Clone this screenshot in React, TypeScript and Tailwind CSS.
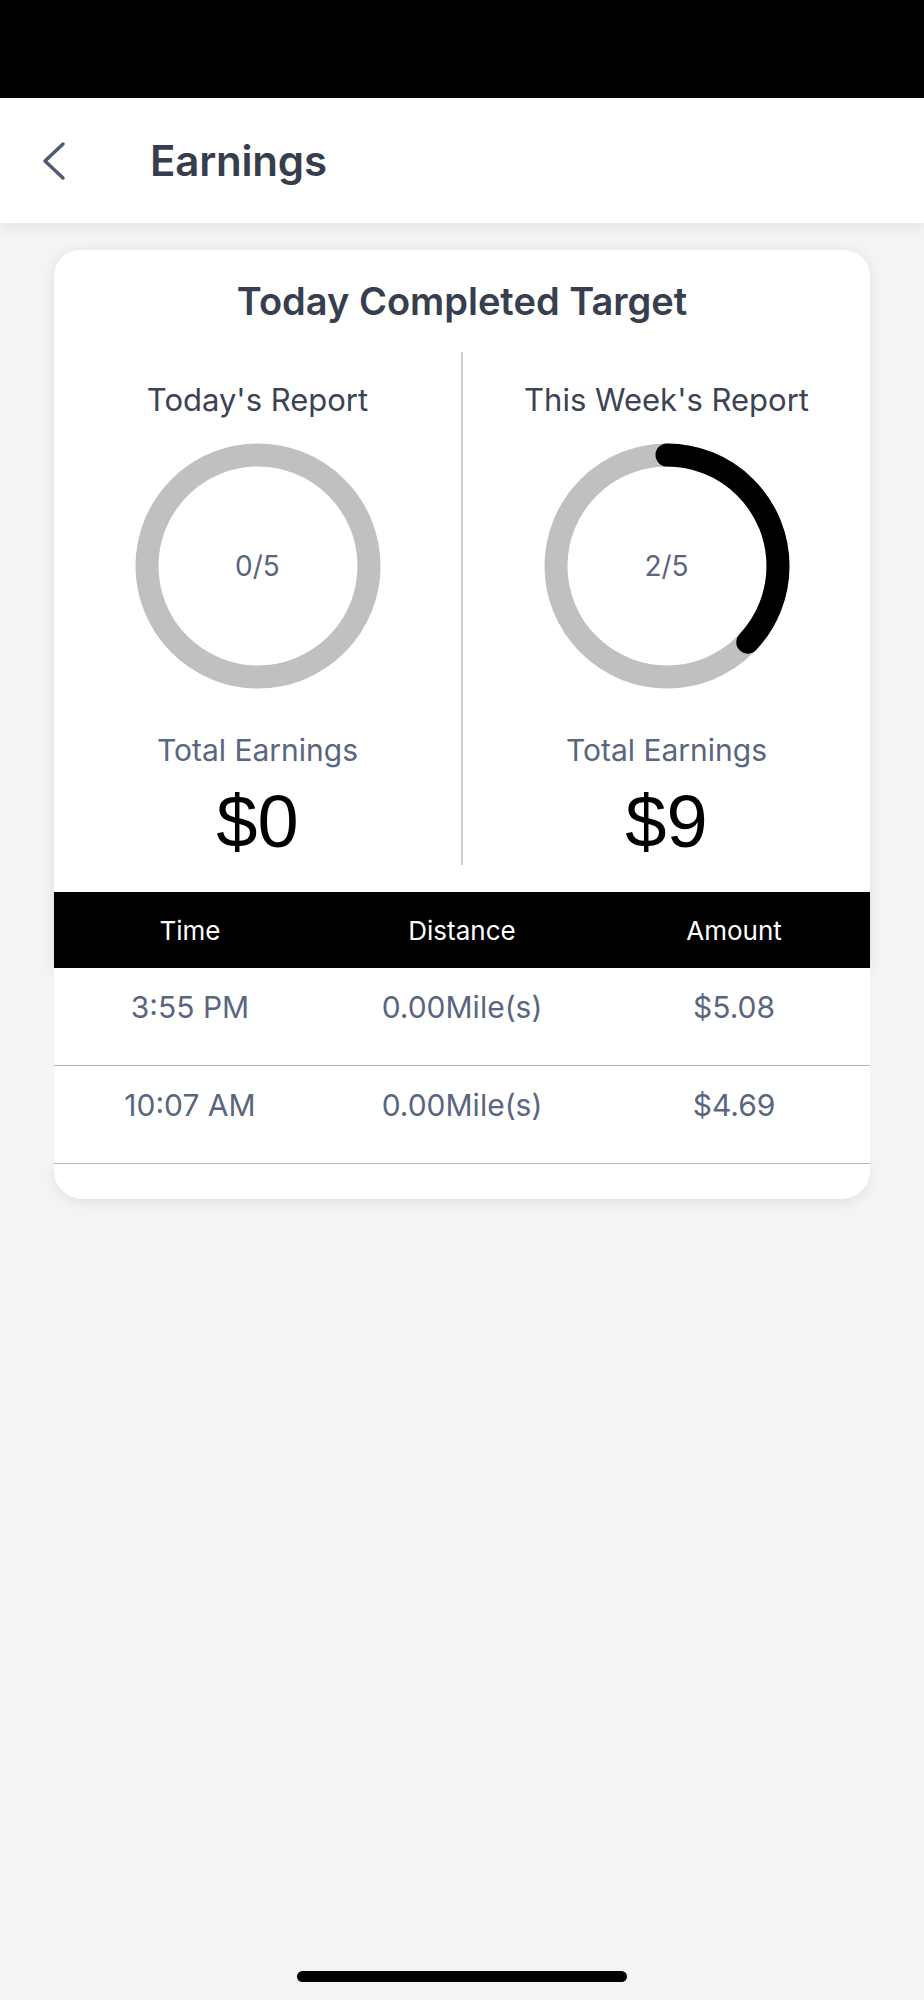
import React from 'react'

const RADIUS = 111
const CIRC = 2 * Math.PI * RADIUS

interface RingProps {
  label: string
  // fraction of the ring drawn in black
  progress: number
}

function Ring({ label, progress }: RingProps) {
  const dash = CIRC * progress
  return (
    <div className="relative w-[246px] h-[246px]">
      <svg width="246" height="246" viewBox="0 0 246 246" className="block">
        <circle cx="123" cy="123" r={RADIUS} fill="none" stroke="#c0c0c0" strokeWidth="23" />
        {progress > 0 && (
          <circle
            cx="123"
            cy="123"
            r={RADIUS}
            fill="none"
            stroke="#000"
            strokeWidth="23"
            strokeLinecap="round"
            strokeDasharray={`${dash} ${CIRC}`}
            transform="rotate(-90 123 123)"
          />
        )}
      </svg>
      <div className="absolute inset-0 flex items-center justify-center text-[28px] text-[#59647e]">
        {label}
      </div>
    </div>
  )
}

interface ReportProps {
  title: string
  ring: string
  progress: number
  total: string
}

function Report({ title, ring, progress, total }: ReportProps) {
  return (
    <div className="flex-1 flex flex-col items-center pt-[29px] pb-[3px]">
      <div className="text-[31px] leading-[38px] text-[#3b4354]">{title}</div>
      <div className="mt-[24px]">
        <Ring label={ring} progress={progress} />
      </div>
      <div className="mt-[42px] text-[30px] leading-[38px] text-[#5a6580]">Total Earnings</div>
      <div className="mt-[13px] text-[74px] leading-[80px] text-black font-['Liberation_Sans',Arial,sans-serif]">
        {total}
      </div>
    </div>
  )
}

const rows = [
  { time: '3:55 PM', distance: '0.00Mile(s)', amount: '$5.08' },
  { time: '10:07 AM', distance: '0.00Mile(s)', amount: '$4.69' },
]

export default function App() {
  return (
    <div className="relative min-h-[2000px] bg-[#f4f4f4] font-['Inter','Noto_Sans',sans-serif]">
      {/* status bar */}
      <div className="h-[98px] bg-black" />

      {/* top bar */}
      <header className="relative z-10 h-[125px] bg-white flex items-center shadow-[0_6px_14px_rgba(0,0,0,0.06)]">
        <button className="ml-[42px] w-[24px] h-[40px] flex items-center justify-center">
          <svg width="24" height="40" viewBox="0 0 24 40" fill="none">
            <path d="M21 3 L3 20 L21 37" stroke="#505b73" strokeWidth="3.5" strokeLinecap="round" strokeLinejoin="round" />
          </svg>
        </button>
        <h1 className="ml-[84px] text-[42px] font-semibold text-[#363d4c] tracking-[-0.2px]">Earnings</h1>
      </header>

      <main className="px-[54px] pt-[27px]">
        <div className="flex flex-col">
          {/* summary + table header */}
          <div className="bg-white rounded-t-[26px] shadow-[0_2px_14px_rgba(0,0,0,0.09)]">
            <h2 className="pt-[28px] text-center text-[38px] leading-[46px] font-semibold text-[#373e4e]">
              Today Completed Target
            </h2>
            <div className="mt-[28px] flex">
              <Report title="Today's Report" ring="0/5" progress={0} total="$0" />
              <div className="w-[2px] bg-[#cfcfcf]" />
              <Report title="This Week's Report" ring="2/5" progress={0.37} total="$9" />
            </div>
            <div className="mt-[27px] h-[76px] bg-black grid grid-cols-3 items-center text-center text-[26px] text-white">
              <div>Time</div>
              <div>Distance</div>
              <div>Amount</div>
            </div>
          </div>

          {/* rows */}
          <div className="relative z-10 bg-white">
            {rows.map((r) => (
              <div
                key={r.time}
                className="h-[98px] border-b-[1.5px] border-[#b1b5c6] grid grid-cols-3 items-start pt-[22px] text-center text-[30px] leading-[34px] text-[#5a6580]"
              >
                <div>{r.time}</div>
                <div>{r.distance}</div>
                <div>{r.amount}</div>
              </div>
            ))}
          </div>

          <div className="h-[35px] bg-white rounded-b-[28px] shadow-[0_4px_12px_rgba(0,0,0,0.07)]" />
        </div>
      </main>

      {/* home indicator */}
      <div className="absolute bottom-[18px] left-[297px] w-[330px] h-[11px] rounded-full bg-black" />
    </div>
  )
}
